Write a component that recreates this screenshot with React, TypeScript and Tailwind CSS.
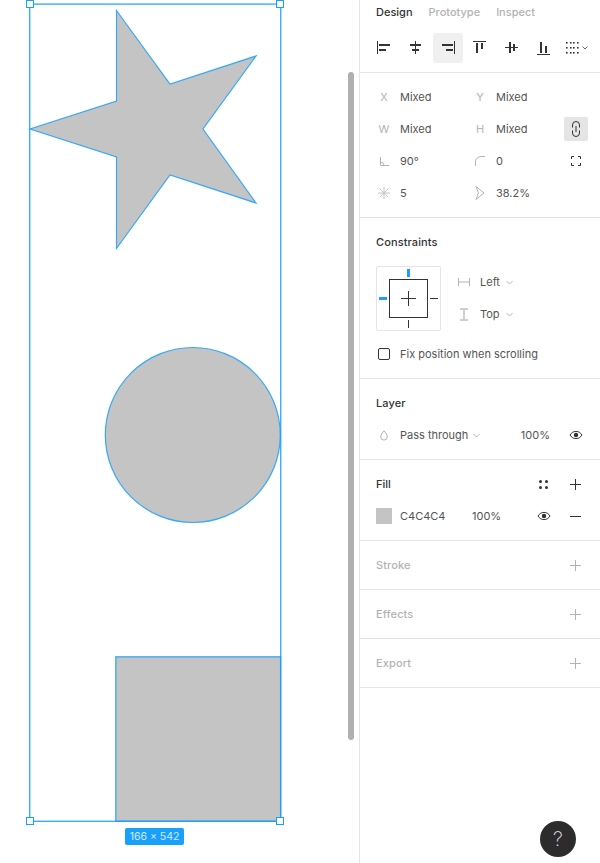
const S = "#18a0fb";

function Ic({ w = 16, h = 16, children, c = "#333" }: { w?: number; h?: number; children: React.ReactNode; c?: string }) {
  return (
    <svg width={w} height={h} viewBox={`0 0 ${w} ${h}`} fill="none" stroke={c} strokeWidth={1} className="shrink-0">
      {children}
    </svg>
  );
}

function AlignIcon({ active, rects }: { active?: boolean; rects: number[][] }) {
  return (
    <div className="w-[32px] h-[30px] flex justify-center">
      <div className={`w-[30px] h-[30px] rounded-[2px] flex items-center justify-center ${active ? "bg-[#f0f0f0]" : ""}`}>
        <svg width="16" height="16" viewBox="0 0 16 16" fill="#333" className="shrink-0">
          {rects.map(([x, y, w, h]) => (
            <rect key={`${x}-${y}-${w}-${h}`} x={x} y={y} width={w} height={h} />
          ))}
        </svg>
      </div>
    </div>
  );
}

function Tab({ label, on }: { label: string; on?: boolean }) {
  return <span className={`font-medium ${on ? "text-[#333]" : "text-[#b3b3b3]"}`}>{label}</span>;
}

function Prop({ icon, value, w }: { icon: React.ReactNode; value: string; w: string }) {
  return (
    <div className={`flex items-center h-8 ${w}`}>
      <div className="w-[24px] flex justify-center text-[#b3b3b3]">{icon}</div>
      <span className="ml-[4px] text-[#555]">{value}</span>
    </div>
  );
}

function Chevron() {
  return (
    <svg width="7" height="5" viewBox="0 0 7 5" fill="none" stroke="#a0a0a0" strokeWidth={0.8} className="shrink-0">
      <path d="M0.500 1l3 3 3-3" />
    </svg>
  );
}

function Plus({ c = "#333" }: { c?: string }) {
  return (
    <Ic w={11} h={11} c={c}>
      <path d="M0 5.500h11M5.500 0v11" />
    </Ic>
  );
}

function Eye() {
  return (
    <svg width="14" height="10" viewBox="0 0 14 10" fill="none" className="shrink-0">
      <path d="M1 5c1.500-2.400 3.500-3.600 6-3.600s4.500 1.200 6 3.600c-1.500 2.400-3.500 3.600-6 3.600S2.500 7.400 1 5z" stroke="#333" />
      <circle cx="7" cy="5" r="2.200" fill="#333" />
    </svg>
  );
}

function EmptySection({ label }: { label: string }) {
  return (
    <div className="h-[49px] border-b border-[#e5e5e5] pl-4 pr-[19px] flex items-center justify-between">
      <span className="font-medium text-[#b3b3b3] tracking-[0.01em]">{label}</span>
      <Plus c="#b3b3b3" />
    </div>
  );
}

function Handle({ pos }: { pos: string }) {
  return <div className={`absolute w-2 h-2 bg-white border border-[#18a0fb] ${pos}`} />;
}

function Canvas() {
  return (
    <div className="relative w-[359px] h-full shrink-0 overflow-hidden bg-white">
      <svg className="absolute left-0 top-0" width="359" height="863" viewBox="0 0 359 863" fill="none">
        <polygon
          points="116.500,10.500 170,84 256,56 203,129 256,203 170,175 116.500,248.500 116.500,157 30,129 116.500,101"
          fill="#c4c4c4"
          stroke={S}
          strokeOpacity={0.85}
          strokeWidth={1.2}
        />
        <circle cx="192.800" cy="435" r="87.500" fill="#c4c4c4" stroke={S} strokeOpacity={0.85} strokeWidth={1.2} />
        <rect x="115.800" y="656.800" width="164.800" height="164.400" fill="#c4c4c4" stroke={S} strokeOpacity={0.85} strokeWidth={1.3} />
        <rect x="29.700" y="4.100" width="251" height="817.200" stroke={S} strokeOpacity={0.85} strokeWidth={1.4} />
      </svg>
      <Handle pos="left-[26px] top-0" />
      <Handle pos="left-[276px] top-0" />
      <Handle pos="left-[26px] top-[817px]" />
      <Handle pos="left-[276px] top-[817px]" />
      <div className="absolute left-[125px] top-[828px] w-[59px] h-[17px] rounded-[2px] bg-[#18a0fb] text-[10.5px] leading-[17px] text-center text-white/80">
        166 × 542
      </div>
      <div className="absolute left-[348px] top-[72px] w-[6px] h-[668px] rounded-[3px] bg-[#b0b0b0]" />
    </div>
  );
}

function Panel() {
  return (
    <div className="relative flex-1 h-full border-l border-[#e5e5e5] bg-white text-[11px] leading-4 text-[#333]">
      <div className="h-[73px] border-b border-[#e5e5e5] pl-4 pt-[4px]">
        <div className="flex gap-[16px]">
          <Tab label="Design" on />
          <Tab label="Prototype" />
          <Tab label="Inspect" />
        </div>
        <div className="flex mt-[13px] -ml-[8px]">
          <AlignIcon rects={[[1, 1, 1, 13], [3, 4, 11, 2], [3, 9, 7, 2]]} />
          <AlignIcon rects={[[7, 1, 1, 13], [2, 4, 11, 2], [4, 9, 7, 2]]} />
          <AlignIcon active rects={[[14, 1, 1, 13], [2, 4, 11, 2], [6, 9, 7, 2]]} />
          <AlignIcon rects={[[1, 1, 13, 1], [4, 3, 2, 10], [9, 3, 2, 6]]} />
          <AlignIcon rects={[[1, 7, 13, 1], [5, 2, 2, 11], [9, 4, 2, 7]]} />
          <AlignIcon rects={[[1, 14, 13, 1], [4, 2, 2, 11], [9, 6, 2, 7]]} />
          <div className="h-[30px] pl-[6px] flex items-center gap-[3px]">
            <svg width="13" height="12" viewBox="0 0 13 12" fill="#333" className="shrink-0">
              {[0, 5, 10].flatMap((y) =>
                [0, 4, 7, 11].map((x) => <rect key={`${x}-${y}`} x={x} y={y} width="1.600" height="1.600" />)
              )}
            </svg>
            <svg width="6" height="4" viewBox="0 0 6 4" fill="none" stroke="#555" strokeWidth={0.9} className="shrink-0">
              <path d="M0.500 0.500L3 3l2.500-2.500" />
            </svg>
          </div>
        </div>
      </div>

      <div className="h-[145px] border-b border-[#e5e5e5] pl-[12px] pr-[11px] pt-2">
        <div className="flex">
          <Prop w="w-[96px]" icon={<span>X</span>} value="Mixed" />
          <Prop w="w-[96px]" icon={<span>Y</span>} value="Mixed" />
        </div>
        <div className="flex items-center">
          <Prop w="w-[96px]" icon={<span>W</span>} value="Mixed" />
          <Prop w="w-[96px]" icon={<span>H</span>} value="Mixed" />
          <div className="w-6 h-6 rounded-[2px] bg-[#e5e5e5] flex items-center justify-center">
            <Ic w={8} h={16}>
              <path d="M0.500 6.500V4a3.500 3.500 0 0 1 7 0v2.500M0.500 9.500V12a3.500 3.500 0 0 0 7 0V9.500M4 5v6" />
            </Ic>
          </div>
        </div>
        <div className="flex items-center">
          <Prop
            w="w-[96px]"
            icon={
              <Ic w={9} h={9} c="#b3b3b3">
                <path d="M0.500 0v8.500H9M0.500 5a3.500 3.500 0 0 1 3.500 3.500" />
              </Ic>
            }
            value="90°"
          />
          <Prop
            w="w-[96px]"
            icon={
              <Ic w={10} h={10} c="#b3b3b3">
                <path d="M0.500 10V6a5.500 5.500 0 0 1 5.500-5.500h4" />
              </Ic>
            }
            value="0"
          />
          <div className="w-6 flex justify-center">
            <Ic w={10} h={10}>
              <path d="M0.500 3V0.500H3M7 0.500h2.500V3M9.500 7v2.500H7M3 9.500H0.500V7" />
            </Ic>
          </div>
        </div>
        <div className="flex items-center">
          <Prop
            w="w-[96px]"
            icon={
              <Ic w={12} h={12} c="#c4c4c4">
                <path d="M6 0v12M0 6h12M1.800 1.800l8.400 8.400M10.200 1.800l-8.400 8.400" />
              </Ic>
            }
            value="5"
          />
          <Prop
            w="w-[96px]"
            icon={
              <Ic w={10} h={14} c="#b3b3b3">
                <path d="M1 0.500L9 7 1 13.500l2.500-6.500z" />
              </Ic>
            }
            value="38.2%"
          />
        </div>
      </div>

      <div className="h-[161px] border-b border-[#e5e5e5] pl-4 pt-4">
        <div className="font-medium tracking-[0.01em]">Constraints</div>
        <div className="flex mt-[16px]">
          <div className="relative w-[65px] h-[65px] rounded-[2px] border border-[#e5e5e5]">
            <div className="absolute left-[12px] top-[12px] w-[39px] h-[39px] border border-[#333]" />
            <div className="absolute left-[24px] top-[31px] w-[15px] h-px bg-[#333]" />
            <div className="absolute left-[31px] top-[24px] w-px h-[15px] bg-[#333]" />
            <div className="absolute left-[30px] top-[2px] w-[3px] h-[8px] bg-[#18a0fb]" />
            <div className="absolute left-[2px] top-[30px] w-[8px] h-[3px] bg-[#18a0fb]" />
            <div className="absolute left-[53px] top-[31px] w-[8px] h-px bg-[#333]" />
            <div className="absolute left-[31px] top-[53px] w-px h-[8px] bg-[#333]" />
          </div>
          <div className="ml-[17px] flex flex-col">
            <div className="flex items-center h-8">
              <div className="w-[12px] flex justify-center">
                <Ic w={12} h={8} c="#b3b3b3">
                  <path d="M0.500 0v8M11.500 0v8M1 4h10" />
                </Ic>
              </div>
              <span className="ml-[10px] text-[#555]">Left</span>
              <span className="ml-[6px]">
                <Chevron />
              </span>
            </div>
            <div className="flex items-center h-8">
              <div className="w-[12px] flex justify-center">
                <Ic w={8} h={13} c="#cfcfcf">
                  <path d="M0 1h8M0 12h8M4 1v11" strokeWidth={2} />
                </Ic>
              </div>
              <span className="ml-[10px] text-[#555]">Top</span>
              <span className="ml-[6px]">
                <Chevron />
              </span>
            </div>
          </div>
        </div>
        <div className="flex items-center mt-[15px] ml-[2px]">
          <div className="w-[12px] h-[12px] rounded-[2px] border border-[#333]" />
          <span className="ml-[10px] text-[#555]">Fix position when scrolling</span>
        </div>
      </div>

      <div className="h-[81px] border-b border-[#e5e5e5] pl-4 pr-[17px] pt-4">
        <div className="font-medium tracking-[0.01em]">Layer</div>
        <div className="flex items-center justify-between mt-[16px]">
          <div className="flex items-center">
            <div className="w-[16px] flex justify-center">
              <Ic w={8} h={11} c="#b3b3b3">
                <path d="M4 0.800C2.500 3 0.700 4.500 0.700 6.800a3.300 3.300 0 0 0 6.600 0C7.300 4.500 5.500 3 4 0.800z" />
              </Ic>
            </div>
            <span className="ml-[8px] text-[#555]">Pass through</span>
            <span className="ml-[5px]">
              <Chevron />
            </span>
          </div>
          <div className="flex items-center">
            <span className="text-[#555]">100%</span>
            <span className="ml-[19px] mr-0">
              <Eye />
            </span>
          </div>
        </div>
      </div>

      <div className="h-[81px] border-b border-[#e5e5e5] pl-4 pr-[19px]">
        <div className="flex items-center justify-between h-[48px]">
          <span className="font-medium">Fill</span>
          <div className="flex items-center gap-[22px]">
            <svg width="9" height="9" viewBox="0 0 9 9" fill="#333" className="shrink-0">
              <circle cx="1.500" cy="1.500" r="1.500" />
              <circle cx="7.500" cy="1.500" r="1.500" />
              <circle cx="1.500" cy="7.500" r="1.500" />
              <circle cx="7.500" cy="7.500" r="1.500" />
            </svg>
            <Plus />
          </div>
        </div>
        <div className="flex items-center">
          <div className="w-4 h-4 bg-[#c4c4c4]" />
          <span className="ml-2 text-[#555] w-[72px]">C4C4C4</span>
          <span className="text-[#555] w-[65px]">100%</span>
          <Eye />
          <div className="ml-[19px] w-[11px] h-px bg-[#333]" />
        </div>
      </div>

      <EmptySection label="Stroke" />
      <EmptySection label="Effects" />
      <EmptySection label="Export" />

      <div className="absolute left-[180px] top-[821px] w-9 h-9 rounded-full bg-[#2c2c2c] flex items-center justify-center text-[#e8e8e8] font-extralight text-[20px] leading-none">
        ?
      </div>
    </div>
  );
}

export default function App() {
  return (
    <div className="flex w-[600px] h-[863px] overflow-hidden bg-white font-['Inter',sans-serif]">
      <Canvas />
      <Panel />
    </div>
  );
}
